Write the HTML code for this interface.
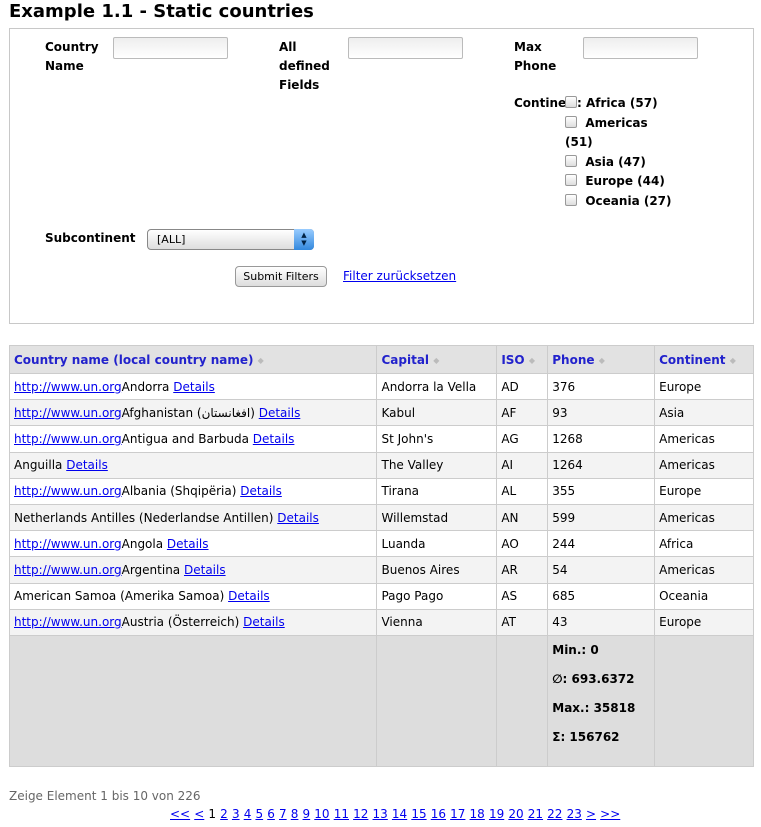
<!DOCTYPE html>
<html><head><meta charset="utf-8"><style>
*{margin:0;padding:0;box-sizing:border-box}
body{width:761px;height:827px;background:#fff;font-family:"DejaVu Sans",Verdana,sans-serif;font-size:12px;color:#000;position:relative;overflow:hidden}
.a{position:absolute}
h1{position:absolute;left:9px;top:1px;font-size:18px;font-weight:bold;white-space:nowrap}
.box{left:9px;top:28px;width:745px;height:296px;border:1px solid #c8c8c8}
.lb{font-weight:bold;font-size:12px;line-height:19px}
.in{width:115px;height:22px;border:1px solid #bbb;border-radius:2px;background:linear-gradient(#eee,#fff)}
.cb{display:inline-block;width:12px;height:12px;border:1px solid #999;border-radius:2px;background:linear-gradient(#fff,#ddd);vertical-align:-1px}
a{color:#00e}
table{position:absolute;left:9px;top:345px;border-collapse:collapse;width:745px;font-size:12px}
td,th{border:1px solid #ccc;padding:0 4px;height:26.2px;text-align:left;white-space:nowrap}
th{background:#e2e2e2;color:#22c;font-weight:bold;height:28px}
th span{color:#bbb;font-size:8px;vertical-align:1px}
tr:nth-child(odd) td{background:#f3f3f3}
tr.f td{background:#ddd;vertical-align:top;height:131px}
.f b{display:block;line-height:29px;margin-top:0}
</style></head><body>
<h1>Example 1.1 - Static countries</h1>
<div class="a box"></div>
<div class="a lb" style="left:45px;top:38px">Country<br>Name</div>
<div class="a in" style="left:113px;top:37px"></div>
<div class="a lb" style="left:279px;top:38px">All<br>defined<br>Fields</div>
<div class="a in" style="left:348px;top:37px"></div>
<div class="a lb" style="left:514px;top:38px">Max<br>Phone</div>
<div class="a in" style="left:583px;top:37px"></div>
<div class="a lb" style="left:514px;top:94px">Contine</div>
<div class="a lb" style="left:565px;top:94px;width:110px;line-height:19.5px"><span class="cb"></span>: Africa (57)<br><span class="cb"></span>&nbsp; Americas<br>(51)<br><span class="cb"></span>&nbsp; Asia (47)<br><span class="cb"></span>&nbsp; Europe (44)<br><span class="cb"></span>&nbsp; Oceania (27)</div>
<div class="a lb" style="left:45px;top:229px">Subcontinent</div>
<div class="a" style="left:147px;top:229px;width:167px;height:21px;border:1px solid #888;border-radius:4px;background:linear-gradient(#fff,#ddd);font-size:11px;padding:3px 0 0 9px">[ALL]<div class="a" style="right:-1px;top:-1px;width:20px;height:21px;border-radius:0 4px 4px 0;background:linear-gradient(#9cf,#38d);color:#024;font-size:7px;text-align:center;line-height:8px;padding-top:2px">▲<br>▼</div></div>
<div class="a" style="left:235px;top:266px;width:92px;height:21px;border:1px solid #999;border-radius:4px;background:linear-gradient(#fff,#ddd);font-size:11px;text-align:center;line-height:19px">Submit Filters</div>
<a class="a" style="left:343px;top:269px" href="#">Filter zurücksetzen</a>
<table>
<colgroup><col style="width:368px"><col style="width:120px"><col style="width:51px"><col style="width:107px"><col style="width:99px"></colgroup>
<tr><th>Country name (local country name) <span>◆</span></th><th>Capital <span>◆</span></th><th>ISO <span>◆</span></th><th>Phone <span>◆</span></th><th>Continent <span>◆</span></th></tr>
<tr><td><a href="#">http://www.un.org</a>Andorra <a href="#">Details</a></td><td>Andorra la Vella</td><td>AD</td><td>376</td><td>Europe</td></tr>
<tr><td><a href="#">http://www.un.org</a>Afghanistan (افغانستان) <a href="#">Details</a></td><td>Kabul</td><td>AF</td><td>93</td><td>Asia</td></tr>
<tr><td><a href="#">http://www.un.org</a>Antigua and Barbuda <a href="#">Details</a></td><td>St John's</td><td>AG</td><td>1268</td><td>Americas</td></tr>
<tr><td>Anguilla <a href="#">Details</a></td><td>The Valley</td><td>AI</td><td>1264</td><td>Americas</td></tr>
<tr><td><a href="#">http://www.un.org</a>Albania (Shqipëria) <a href="#">Details</a></td><td>Tirana</td><td>AL</td><td>355</td><td>Europe</td></tr>
<tr><td>Netherlands Antilles (Nederlandse Antillen) <a href="#">Details</a></td><td>Willemstad</td><td>AN</td><td>599</td><td>Americas</td></tr>
<tr><td><a href="#">http://www.un.org</a>Angola <a href="#">Details</a></td><td>Luanda</td><td>AO</td><td>244</td><td>Africa</td></tr>
<tr><td><a href="#">http://www.un.org</a>Argentina <a href="#">Details</a></td><td>Buenos Aires</td><td>AR</td><td>54</td><td>Americas</td></tr>
<tr><td>American Samoa (Amerika Samoa) <a href="#">Details</a></td><td>Pago Pago</td><td>AS</td><td>685</td><td>Oceania</td></tr>
<tr><td><a href="#">http://www.un.org</a>Austria (Österreich) <a href="#">Details</a></td><td>Vienna</td><td>AT</td><td>43</td><td>Europe</td></tr>
<tr class="f"><td></td><td></td><td></td><td><b>Min.: 0</b><b>∅: 693.6372</b><b>Max.: 35818</b><b>Σ: 156762</b></td><td></td></tr>
</table>
<div class="a" style="left:9px;top:789px;color:#666">Zeige Element 1 bis 10 von 226</div>
<div class="a" style="left:170px;top:807px;white-space:nowrap;word-spacing:0.3px"><a href="#">&lt;&lt;</a> <a href="#">&lt;</a> 1 <a href="#">2</a> <a href="#">3</a> <a href="#">4</a> <a href="#">5</a> <a href="#">6</a> <a href="#">7</a> <a href="#">8</a> <a href="#">9</a> <a href="#">10</a> <a href="#">11</a> <a href="#">12</a> <a href="#">13</a> <a href="#">14</a> <a href="#">15</a> <a href="#">16</a> <a href="#">17</a> <a href="#">18</a> <a href="#">19</a> <a href="#">20</a> <a href="#">21</a> <a href="#">22</a> <a href="#">23</a> <a href="#">&gt;</a> <a href="#">&gt;&gt;</a></div>
</body></html>
